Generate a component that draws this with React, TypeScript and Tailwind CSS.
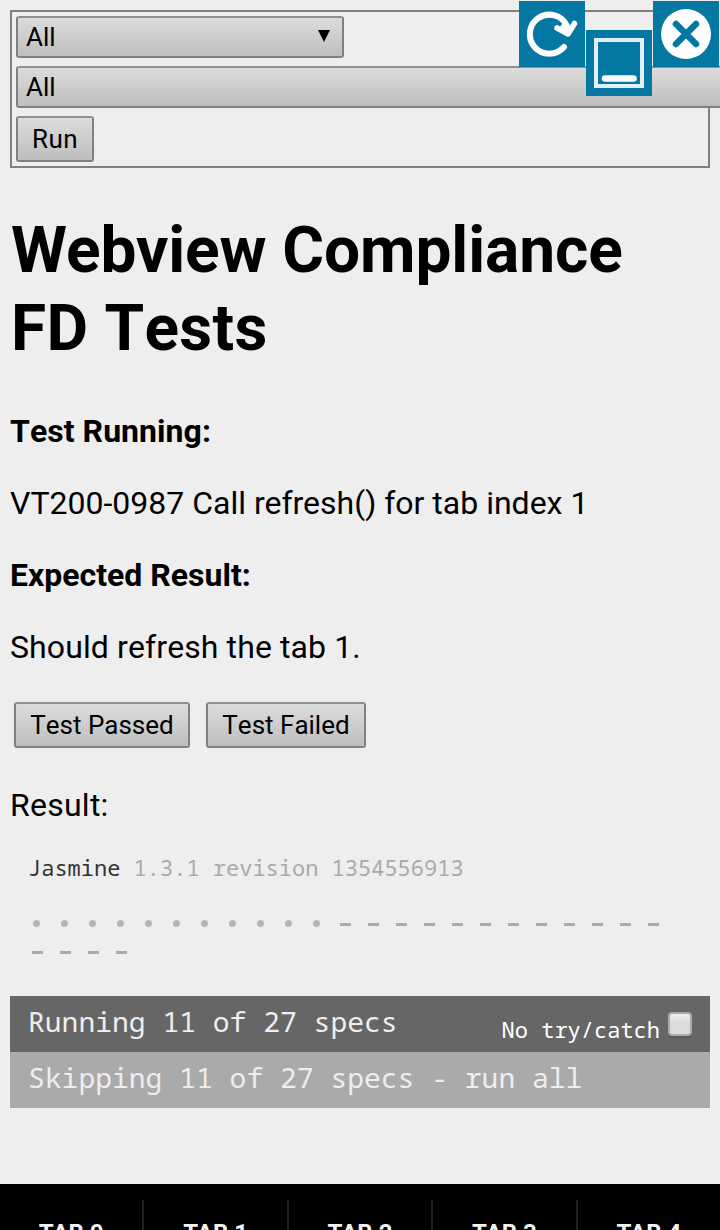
import React from "react";

const control =
  "flex items-center rounded-[3px] border-2 border-[#808080] border-t-[#909090] bg-linear-to-b from-[#dcdcdc] to-[#bebebe] text-[26px] leading-none text-black";

const specs = Array.from({ length: 27 }, (_, i) => i < 11);
const tabs = ["TAB 0", "TAB 1", "TAB 2", "TAB 3", "TAB 4"];

function Filters() {
  return (
    <div className="h-[158px] w-[700px] border-2 border-[#808080] pt-1 pl-1">
      <div className={`${control} h-[42px] w-[328px] justify-between pr-3 pl-2`}>
        <span>All</span>
        <svg className="-mt-0.5 h-3 w-3" viewBox="0 0 12 12">
          <path d="M0 0H12L6 12Z" />
        </svg>
      </div>
      <div className={`${control} mt-2 h-[42px] w-[760px] pl-2`}>
        <span>All</span>
      </div>
      <button className={`${control} mt-2 h-[46px] w-[78px] pl-[14px] tracking-[0.4px]`}>Run</button>
    </div>
  );
}

function WindowButtons() {
  return (
    <div className="absolute top-px left-[519px] flex gap-px">
      <svg className="h-[66px] w-[66px] bg-[#0478a3]" viewBox="0 0 66 66" fill="none" stroke="#fff">
        <path d="M45 46A19.5 19.5 0 1 1 48 25" strokeWidth="6" strokeLinecap="round" />
        <path d="M38 27L49 33L55.5 22.5" strokeWidth="5.5" strokeLinecap="round" strokeLinejoin="round" />
        <path d="M44 22L51 24L50 34L39 28Z" fill="#fff" stroke="none" />
      </svg>
      <svg className="mt-[29px] h-[66px] w-[66px] bg-[#0478a3]" viewBox="0 0 66 66" fill="none" stroke="#fff">
        <rect x="10" y="10" width="46" height="46" stroke="#e2f0f6" strokeWidth="4" />
        <path d="M19 48.5H47.5" strokeWidth="6.5" strokeLinecap="round" />
      </svg>
      <svg className="h-[66px] w-[66px] bg-[#0478a3]" viewBox="0 0 66 66" fill="none">
        <circle cx="33" cy="33" r="25" fill="#fff" />
        <path d="M23 23L43 43M43 23L23 43" stroke="#0478a3" strokeWidth="6.5" strokeLinecap="round" />
      </svg>
    </div>
  );
}

export default function App() {
  return (
    <div className="relative flex h-[1230px] w-[720px] flex-col overflow-hidden bg-[#eee] font-['Roboto',sans-serif] text-black [font-kerning:none]">
      <div className="px-2.5 pt-2.5">
        <Filters />
        <h1 className="mt-[44px] pl-px text-[64px] leading-[78px] font-bold">
          <span className="tracking-[-0.1px] [font-kerning:normal]">Webview Compliance</span>
          <br />
          <span className="tracking-[0.3px]">FD Tests</span>
        </h1>
        <div className="mt-[43px] flex flex-col gap-8 text-[32px] leading-10">
          <p className="font-bold tracking-[0.05px]">Test Running:</p>
          <p className="[font-kerning:normal]">VT200-0987 Call refresh() for tab index 1</p>
          <p className="font-bold">Expected Result:</p>
          <p className="tracking-[0.1px]">Should refresh the tab 1.</p>
        </div>
        <div className="mt-[35px] flex gap-4 pl-1">
          <button className={`${control} h-[46px] w-[176px] justify-center`}>Test Passed</button>
          <button className={`${control} h-[46px] w-[160px] justify-center`}>Test Failed</button>
        </div>
        <p className="mt-[37px] text-[32px] leading-10 tracking-[0.25px]">Result:</p>
      </div>

      <div className="mt-7 px-2.5 font-['Noto_Sans_Mono','DejaVu_Sans_Mono',monospace] text-[#eee]">
        <div className="pl-[18px] text-[22px] leading-7 text-[#aaa]">
          <span className="text-[#333]">Jasmine</span> 1.3.1 revision 1354556913
        </div>
        <ul className="mt-7 flex w-[672px] flex-wrap pl-[18px]">
          {specs.map((done, i) => (
            <li key={i} className="flex h-7 w-7 items-center pl-1">
              {done ? (
                <span className="ml-px h-[7px] w-[7px] rounded-full bg-[#b5b5b5]" />
              ) : (
                <span className="mt-[3px] h-[3px] w-[11px] bg-[#aaa]" />
              )}
            </li>
          ))}
        </ul>
        <div className="mt-[31px] flex h-14 items-center justify-between bg-[#666] pr-[18px] pl-[18px] text-[28px]">
          <span className="-mt-1.5">Running 11 of 27 specs</span>
          <label className="flex items-center gap-2 text-[22px] text-white">
            <span className="mt-2.5">No try/catch</span>
            <span className="h-6 w-6 rounded-[4px] border-2 border-[#aaa] bg-linear-to-b from-[#eee] to-[#ddd] to-40% shadow-[0_2px_0_#595959]" />
          </label>
        </div>
        <div className="flex h-14 items-center bg-[#aaa] pl-[18px] text-[28px]">
          <span className="-mt-1.5">Skipping 11 of 27 specs - run all</span>
        </div>
      </div>

      <div className="mt-[76px] flex h-[96px] shrink-0 bg-black pt-4">
        {tabs.map((tab) => (
          <div
            key={tab}
            className="flex-1 border-r-2 border-[#222] pt-[19px] text-center text-[24px] leading-7 font-bold text-[#f2f2f2] [font-kerning:normal] last:border-r-0"
          >
            {tab}
          </div>
        ))}
      </div>
      <WindowButtons />
    </div>
  );
}
